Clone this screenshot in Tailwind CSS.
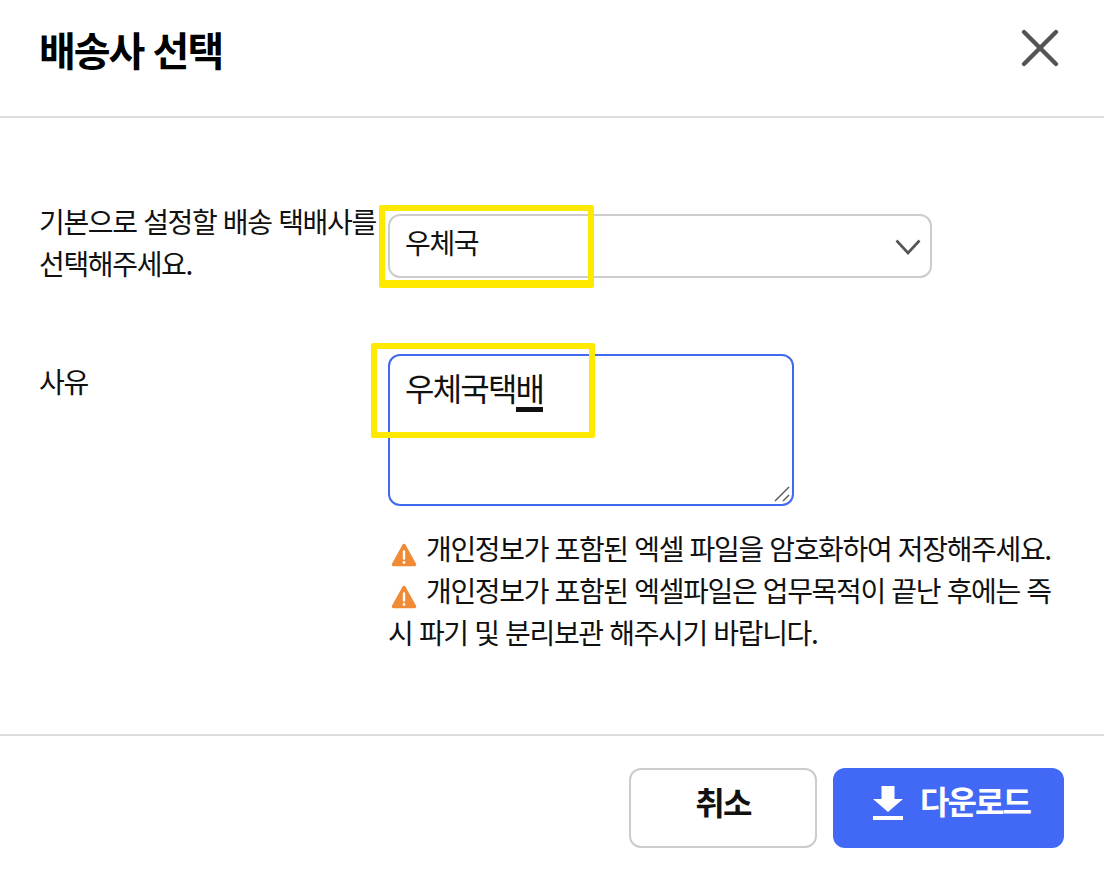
<!DOCTYPE html>
<html lang="ko">
<head>
    <meta charset="UTF-8">
    <title>배송사 선택</title>
    <script src="https://cdn.jsdelivr.net/npm/@tailwindcss/browser@4"></script>
</head>
<body class="bg-white text-[#111] font-['Noto_Sans_CJK_KR','Noto_Sans',sans-serif]">
    <div class="relative w-[1104px] h-[870px] overflow-hidden bg-white">
        <!-- Header -->
        <header class="h-[118px] border-b-2 border-[#dcdcdc] pl-[39px] pr-[44px] flex justify-between">
            <h1 class="mt-[23px] text-[40px] leading-[52px] font-bold tracking-[-2px] text-black">배송사 선택</h1>
            <button class="mt-[28px] w-[40px] h-[40px] text-[#555]">
                <svg viewBox="0 0 40 40" class="w-[40px] h-[40px]" fill="none" stroke="currentColor" stroke-width="4.4" stroke-linecap="round"><path d="M4 4 L36 36 M36 4 L4 36"/></svg>
            </button>
        </header>

        <!-- Form -->
        <main class="h-[618px] pl-[39px] pr-[40px] pt-[82px] border-b-2 border-[#dcdcdc] text-[28px] leading-[42px] tracking-[-1.35px]">
            <div class="grid grid-cols-[349px_1fr] items-start">
                <label class="block">기본으로 설정할 배송 택배사를<br>선택해주세요.</label>
                <div class="relative w-[544px] h-[64px] mt-[14px] rounded-[12px] border-2 border-[#cccccc] pl-[15px] pb-[8px] flex items-center">
                    <span>우체국</span>
                    <svg viewBox="0 0 26 16" class="absolute right-[9px] top-[23px] w-[26px] h-[16px] text-[#555]" fill="none" stroke="currentColor" stroke-width="2.6"><path d="M1.5 1.5 L13 14 L24.5 1.5"/></svg>
                </div>
            </div>

            <div class="grid grid-cols-[349px_1fr] items-start mt-[70px]">
                <label class="block mt-[6px]">사유</label>
                <div>
                    <div class="relative w-[406px] h-[152px] rounded-[12px] border-2 border-[#4169f0] pl-[15px] pt-[7px] text-[32px] leading-[48px] tracking-[-1.8px]">
                        <span>우체국택<span class="border-b-[5px] border-[#111] inline-block leading-[39px]">배</span></span>
                        <svg viewBox="0 0 16 16" class="absolute right-[2px] bottom-[2px] w-[16px] h-[16px] text-[#555]" fill="none" stroke="currentColor" stroke-width="1.4"><path d="M1 15 L15 1 M9 15 L15 9"/></svg>
                    </div>
                    <div class="mt-[21px] w-[672px]">
                        <p>
                            <svg viewBox="0 0 28 26" class="inline-block align-[-8px] w-[28px] h-[26px] ml-[2px] mr-[8px]"><path d="M14 3.5 L24.5 22.5 H3.5 Z" fill="#f08a35" stroke="#f08a35" stroke-width="3.5" stroke-linejoin="round"/><path d="M14 9.5 V16.5" stroke="#fff" stroke-width="2.4" stroke-linecap="round"/><circle cx="14" cy="20.5" r="1.4" fill="#fff"/></svg>개인정보가 포함된 엑셀 파일을 암호화하여 저장해주세요.
                        </p>
                        <p>
                            <svg viewBox="0 0 28 26" class="inline-block align-[-8px] w-[28px] h-[26px] ml-[2px] mr-[8px]"><path d="M14 3.5 L24.5 22.5 H3.5 Z" fill="#f08a35" stroke="#f08a35" stroke-width="3.5" stroke-linejoin="round"/><path d="M14 9.5 V16.5" stroke="#fff" stroke-width="2.4" stroke-linecap="round"/><circle cx="14" cy="20.5" r="1.4" fill="#fff"/></svg>개인정보가 포함된 엑셀파일은 업무목적이 끝난 후에는 즉시 파기 및 분리보관 해주시기 바랍니다.
                        </p>
                    </div>
                </div>
            </div>
        </main>

        <!-- Footer -->
        <footer class="flex justify-end gap-[16px] pt-[32px] pr-[40px]">
            <button class="w-[188px] h-[80px] rounded-[12px] border-2 border-[#cccccc] bg-white pb-[14px] text-[32px] font-bold tracking-[-1.6px]">취소</button>
            <button class="w-[231px] h-[80px] rounded-[12px] bg-[#4169f6] text-white pl-[6px] text-[32px] font-bold tracking-[-2px] flex items-center justify-center gap-[17px]">
                <svg viewBox="0 0 30 34" class="w-[30px] h-[34px] mt-[-10px]" fill="currentColor"><path d="M8.5 0 H21.5 V13 H30 L15 26 L0 13 H8.5 Z"/><rect x="0" y="30" width="30" height="4"/></svg>
                <span class="mt-[-16px]">다운로드</span>
            </button>
        </footer>

        <!-- Yellow annotation boxes -->
        <div class="absolute left-[379px] top-[205px] w-[215px] h-[83px] border-[6px] border-b-[8px] border-[#ffe900] rounded-[2px]"></div>
        <div class="absolute left-[371px] top-[343px] w-[224px] h-[95px] border-[6px] border-[#ffe900] rounded-[2px]"></div>
    </div>
</body>
</html>
